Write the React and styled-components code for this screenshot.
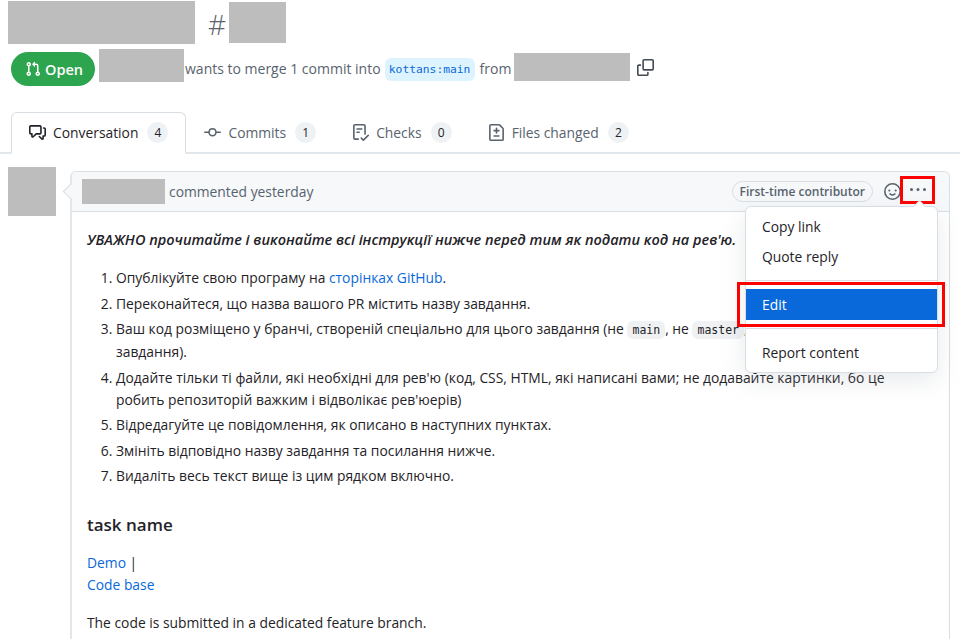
import React from 'react';
import styled, { createGlobalStyle } from 'styled-components';

const GlobalStyle = createGlobalStyle`
  html, body {
    margin: 0;
    padding: 0;
    background: #fff;
    overflow: hidden;
  }
  body {
    font-family: "Open Sans", "Noto Sans", sans-serif;
    color: #1f2328;
  }
  * { box-sizing: border-box; }
`;

const Octicon = ({ d, size = 17, color = 'currentColor' }) => (
  <svg width={size} height={size} viewBox="0 0 16 16" fill={color} aria-hidden="true">
    <path d={d} />
  </svg>
);

const icons = {
  pr: 'M1.5 3.25a2.25 2.25 0 1 1 3 2.122v5.256a2.251 2.251 0 1 1-1.5 0V5.372A2.25 2.25 0 0 1 1.5 3.25Zm5.677-.177L9.573.677A.25.25 0 0 1 10 .854V2.5h1A2.5 2.5 0 0 1 13.5 5v5.628a2.251 2.251 0 1 1-1.5 0V5a1 1 0 0 0-1-1h-1v1.646a.25.25 0 0 1-.427.177L7.177 3.427a.25.25 0 0 1 0-.354ZM3.75 2.5a.75.75 0 1 0 0 1.5.75.75 0 0 0 0-1.5Zm0 9.5a.75.75 0 1 0 0 1.5.75.75 0 0 0 0-1.5Zm8.25.75a.75.75 0 1 0 1.5 0 .75.75 0 0 0-1.5 0Z',
  comment: 'M1.75 1h8.5c.966 0 1.75.784 1.75 1.75v5.5A1.75 1.75 0 0 1 10.25 10H7.061l-2.574 2.573A1.458 1.458 0 0 1 2 11.543V10h-.25A1.75 1.75 0 0 1 0 8.25v-5.5C0 1.784.784 1 1.75 1ZM1.5 2.75v5.5c0 .138.112.25.25.25h1a.75.75 0 0 1 .75.75v2.19l2.72-2.72a.749.749 0 0 1 .53-.22h3.5a.25.25 0 0 0 .25-.25v-5.5a.25.25 0 0 0-.25-.25h-8.5a.25.25 0 0 0-.25.25Zm13 2a.25.25 0 0 0-.25-.25h-.5a.75.75 0 0 1 0-1.5h.5c.966 0 1.75.784 1.75 1.75v5.5A1.75 1.75 0 0 1 14.25 12H14v1.543a1.458 1.458 0 0 1-2.487 1.03L9.22 12.28a.749.749 0 0 1 .326-1.275.749.749 0 0 1 .734.215l2.22 2.22v-2.19a.75.75 0 0 1 .75-.75h1a.25.25 0 0 0 .25-.25Z',
  commit: 'M11.93 8.5a4.002 4.002 0 0 1-7.86 0H.75a.75.75 0 0 1 0-1.5h3.32a4.002 4.002 0 0 1 7.86 0h3.32a.75.75 0 0 1 0 1.5Zm-1.43-.75a2.5 2.5 0 1 0-5 0 2.5 2.5 0 0 0 5 0Z',
  checklist: 'M2.5 1.75v11.5c0 .138.112.25.25.25h3.17a.75.75 0 0 1 0 1.5H2.75A1.75 1.75 0 0 1 1 13.25V1.75C1 .784 1.784 0 2.75 0h8.5C12.216 0 13 .784 13 1.75v7.736a.75.75 0 0 1-1.5 0V1.75a.25.25 0 0 0-.25-.25h-8.5a.25.25 0 0 0-.25.25Zm13.274 9.537v-.001l-4.557 4.45a.75.75 0 0 1-1.055-.008l-1.943-1.95a.75.75 0 0 1 1.062-1.058l1.419 1.425 4.026-3.932a.75.75 0 1 1 1.048 1.074ZM4.75 4h4.5a.75.75 0 0 1 0 1.5h-4.5a.75.75 0 0 1 0-1.5ZM4 7.75A.75.75 0 0 1 4.75 7h2a.75.75 0 0 1 0 1.5h-2A.75.75 0 0 1 4 7.75Z',
  diff: 'M1 1.75C1 .784 1.784 0 2.75 0h7.586c.464 0 .909.184 1.237.513l2.914 2.914c.329.328.513.773.513 1.237v9.586A1.75 1.75 0 0 1 13.25 16H2.75A1.75 1.75 0 0 1 1 14.25Zm1.75-.25a.25.25 0 0 0-.25.25v12.5c0 .138.112.25.25.25h10.5a.25.25 0 0 0 .25-.25V4.664a.25.25 0 0 0-.073-.177l-2.914-2.914a.25.25 0 0 0-.177-.073ZM8 3.25a.75.75 0 0 1 .75.75v1.5h1.5a.75.75 0 0 1 0 1.5h-1.5v1.5a.75.75 0 0 1-1.5 0V7h-1.5a.75.75 0 0 1 0-1.5h1.5V4A.75.75 0 0 1 8 3.25Zm-3 8a.75.75 0 0 1 .75-.75h4.5a.75.75 0 0 1 0 1.5h-4.5a.75.75 0 0 1-.75-.75Z',
  copy: 'M0 6.75C0 5.784.784 5 1.75 5h1.5a.75.75 0 0 1 0 1.5h-1.5a.25.25 0 0 0-.25.25v7.5c0 .138.112.25.25.25h7.5a.25.25 0 0 0 .25-.25v-1.5a.75.75 0 0 1 1.5 0v1.5A1.75 1.75 0 0 1 9.25 16h-7.5A1.75 1.75 0 0 1 0 14.25Z M5 1.75C5 .784 5.784 0 6.75 0h7.5C15.216 0 16 .784 16 1.75v7.5A1.75 1.75 0 0 1 14.25 11h-7.5A1.75 1.75 0 0 1 5 9.25Zm1.75-.25a.25.25 0 0 0-.25.25v7.5c0 .138.112.25.25.25h7.5a.25.25 0 0 0 .25-.25v-7.5a.25.25 0 0 0-.25-.25Z',
  smiley: 'M8 0a8 8 0 1 1 0 16A8 8 0 0 1 8 0ZM1.5 8a6.5 6.5 0 1 0 13 0 6.5 6.5 0 0 0-13 0Zm3.82 1.636a.75.75 0 0 1 1.038.175l.007.009c.103.118.22.222.35.31.264.178.683.37 1.285.37.602 0 1.02-.192 1.285-.371.13-.088.247-.192.35-.31l.007-.008a.75.75 0 0 1 1.222.87l-.022-.015c.02.013.021.015.021.015v.001l-.001.002-.002.003-.005.007-.014.019a2.066 2.066 0 0 1-.184.213c-.16.166-.338.316-.53.445-.63.418-1.37.638-2.127.629-.946 0-1.652-.308-2.126-.63a3.331 3.331 0 0 1-.715-.657l-.014-.02-.005-.006-.002-.003v-.002h-.001l.613-.432-.614.43a.75.75 0 0 1 .183-1.044ZM12 7a1 1 0 1 1-2 0 1 1 0 0 1 2 0ZM5 8a1 1 0 1 1 0-2 1 1 0 0 1 0 2Zm5.25 2.25.592.416a97.71 97.71 0 0 0-.592-.416Z',
  kebab: 'M8 9a1.5 1.5 0 1 0 0-3 1.5 1.5 0 0 0 0 3ZM1.5 9a1.5 1.5 0 1 0 0-3 1.5 1.5 0 0 0 0 3Zm13 0a1.5 1.5 0 1 0 0-3 1.5 1.5 0 0 0 0 3Z',
};

const tabs = [
  { label: 'Conversation', icon: 'comment', count: 4, selected: true },
  { label: 'Commits', icon: 'commit', count: 1 },
  { label: 'Checks', icon: 'checklist', count: 0 },
  { label: 'Files changed', icon: 'diff', count: 2 },
];

const App = () => (
  <Page>
    <GlobalStyle />
    <TitleRow>
      <Redacted $w={187} $h={43} />
      <Hash>#</Hash>
      <Redacted $w={57} $h={41} />
    </TitleRow>

    <MetaRow>
      <StatePill>
        <Octicon d={icons.pr} size={16} />
        Open
      </StatePill>
      <Redacted $w={85} $h={33} $lift={8} />
      <MetaText>wants to merge 1 commit into</MetaText>
      <BranchTag>kottans:main</BranchTag>
      <MetaText>from</MetaText>
      <Redacted $w={116} $h={28} $lift={5} />
      <CopyBtn>
        <Octicon d={icons.copy} />
      </CopyBtn>
    </MetaRow>

    <TabBar>
      {tabs.map((t) => (
        <Tab key={t.label} $selected={t.selected}>
          <TabIcon $selected={t.selected}>
            <Octicon d={icons[t.icon]} />
          </TabIcon>
          {t.label}
          <Counter>{t.count}</Counter>
        </Tab>
      ))}
    </TabBar>

    <Discussion>
      <Redacted $w={48} $h={49} />
      <CommentBox>
        <CommentHeader>
          <Redacted $w={83} $h={25} />
          <HeaderText>commented yesterday</HeaderText>
          <HeaderActions>
            <RoleLabel>First-time contributor</RoleLabel>
            <ReactionBtn>
              <Octicon d={icons.smiley} />
            </ReactionBtn>
            <KebabBtn>
              <Octicon d={icons.kebab} size={16} />
            </KebabBtn>
          </HeaderActions>
          <Menu>
            <MenuItem>Copy link</MenuItem>
            <MenuItem>Quote reply</MenuItem>
            <MenuDivider />
            <MenuItemWrap>
              <MenuItem $active>Edit</MenuItem>
            </MenuItemWrap>
            <MenuDivider />
            <MenuItem>Report content</MenuItem>
          </Menu>
        </CommentHeader>
        <CommentBody>
          <Lead>УВАЖНО прочитайте і виконайте всі інструкції нижче перед тим як подати код на рев'ю.</Lead>
          <Steps>
            <li>Опублікуйте свою програму на <Link>сторінках GitHub</Link>.</li>
            <li>Переконайтеся, що назва вашого PR містить назву завдання.</li>
            <li>
              Ваш код розміщено у бранчі, створеній спеціально для цього завдання (не <Code>main</Code>, не <Code>master</Code>,<br />
              завдання).
            </li>
            <li>
              Додайте тільки ті файли, які необхідні для рев'ю (код, CSS, HTML, які написані вами; не додавайте картинки, бо це<br />
              робить репозиторій важким і відволікає рев'юерів)
            </li>
            <li>Відредагуйте це повідомлення, як описано в наступних пунктах.</li>
            <li>Змініть відповідно назву завдання та посилання нижче.</li>
            <li>Видаліть весь текст вище із цим рядком включно.</li>
          </Steps>
          <TaskName>task name</TaskName>
          <Para>
            <Link>Demo</Link> |<br />
            <Link>Code base</Link>
          </Para>
          <Para>The code is submitted in a dedicated feature branch.</Para>
        </CommentBody>
      </CommentBox>
    </Discussion>
  </Page>
);

const Page = styled.div`
  width: 960px;
  height: 639px;
  overflow: hidden;
  font-size: 13.85px;
`;

const Redacted = styled.div`
  flex: none;
  width: ${(p) => p.$w}px;
  height: ${(p) => p.$h}px;
  margin-bottom: ${(p) => p.$lift || 0}px;
  background: #bdbdbd;
`;

const TitleRow = styled.div`
  display: flex;
  align-items: center;
  height: 44px;
  padding-left: 8px;
`;

const Hash = styled.span`
  margin: 4px 3px 0 13px;
  font-size: 28px;
  font-weight: 300;
  line-height: 36px;
  color: #59636e;
`;

const MetaRow = styled.div`
  display: flex;
  align-items: center;
  height: 40px;
  margin-top: 5px;
  padding-left: 11px;
`;

const StatePill = styled.span`
  display: flex;
  align-items: center;
  gap: 4px;
  width: 84px;
  height: 34px;
  margin-right: 4px;
  padding-left: 14px;
  border-radius: 17px;
  background: #2da44e;
  color: #fff;
  font-size: 14.5px;
  font-weight: 600;
`;

const MetaText = styled.span`
  margin: 0 3px 2px 1px;
  color: #59636e;
  font-size: 14px;
  white-space: nowrap;
`;

const BranchTag = styled.code`
  flex: none;
  width: 90px;
  height: 23px;
  margin: 0 4px 0 1px;
  line-height: 23px;
  border-radius: 6px;
  background: #ddf4ff;
  color: #0969da;
  font-family: "DejaVu Sans Mono", "Liberation Mono", monospace;
  font-size: 11.3px;
  text-align: center;
`;

const CopyBtn = styled.span`
  display: flex;
  margin-left: 7px;
  margin-bottom: 3px;
  color: #424a53;
`;

const TabBar = styled.div`
  display: flex;
  align-items: flex-end;
  height: 42px;
  margin-top: 23px;
  padding-left: 11px;
  border-bottom: 2px solid #e1e6eb;
`;

const Tab = styled.div`
  display: flex;
  align-items: center;
  height: 42px;
  margin-bottom: -2px;
  padding: 0 17px;
  border: 1px solid ${(p) => (p.$selected ? '#d8dee4' : 'transparent')};
  border-bottom: 2px solid ${(p) => (p.$selected ? '#fff' : 'transparent')};
  border-radius: 6px 6px 0 0;
  color: ${(p) => (p.$selected ? '#1f2328' : '#59636e')};
`;

const TabIcon = styled.span`
  display: flex;
  margin-right: 7px;
  color: ${(p) => (p.$selected ? '#1f2328' : '#59636e')};
`;

const Counter = styled.span`
  display: flex;
  align-items: center;
  justify-content: center;
  width: 21px;
  height: 21px;
  margin-left: 9px;
  border-radius: 50%;
  background: #eff2f5;
  color: #1f2328;
  font-size: 12px;
`;

const Discussion = styled.div`
  display: flex;
  align-items: flex-start;
  gap: 14px;
  margin-top: 13px;
  padding-left: 8px;
`;

const CommentBox = styled.div`
  position: relative;
  width: 880px;
  height: 600px;
  margin-top: 4px;
  border: 1px solid #d8dee4;
  border-left: 2px solid #e1e6eb;
  border-radius: 6px;
  &::before {
    content: '';
    position: absolute;
    top: 14px;
    left: -7px;
    width: 10px;
    height: 10px;
    transform: rotate(45deg);
    background: #f6f8fa;
    border-left: 1px solid #d8dee4;
    border-bottom: 1px solid #d8dee4;
  }
`;

const CommentHeader = styled.div`
  position: relative;
  display: flex;
  align-items: center;
  height: 40px;
  padding-left: 10px;
  border-bottom: 1px solid #d8dee4;
  border-radius: 6px 6px 0 0;
  background: #f6f8fa;
`;

const HeaderText = styled.span`
  margin-left: 4px;
  color: #59636e;
`;

const HeaderActions = styled.div`
  display: flex;
  align-items: center;
  margin-left: auto;
  margin-right: 14px;
`;

const RoleLabel = styled.span`
  height: 21px;
  padding: 0 7px;
  line-height: 19px;
  border: 1px solid #d8dee4;
  border-radius: 11px;
  color: #59636e;
  font-size: 12px;
  font-weight: 600;
  white-space: nowrap;
`;

const ReactionBtn = styled.span`
  display: flex;
  margin-left: 11px;
  color: #59636e;
`;

const KebabBtn = styled.span`
  display: flex;
  align-items: center;
  justify-content: center;
  width: 35px;
  height: 28px;
  margin-left: -1px;
  margin-bottom: 3px;
  border: 3px solid #f00;
  color: #59636e;
`;

const Menu = styled.div`
  position: absolute;
  z-index: 2;
  top: 34px;
  right: 11px;
  width: 193px;
  padding: 5px 0 4px;
  border: 1px solid #d8dee4;
  border-radius: 6px;
  background: #fff;
  box-shadow: 0 8px 24px rgba(140, 149, 159, 0.2);
  &::before {
    content: '';
    position: absolute;
    top: -5px;
    right: 13px;
    width: 8px;
    height: 8px;
    transform: rotate(45deg);
    background: #fff;
    border-left: 1px solid #d8dee4;
    border-top: 1px solid #d8dee4;
  }
`;

const MenuItemWrap = styled.div`
  position: relative;
  &::after {
    content: '';
    position: absolute;
    inset: -7px -8px -7px -9px;
    border: 3px solid #f00;
  }
`;

const MenuItem = styled.div`
  height: ${(p) => (p.$active ? 31 : 30)}px;
  padding-left: 16px;
  line-height: ${(p) => (p.$active ? 31 : 30)}px;
  background: ${(p) => (p.$active ? '#0969da' : 'transparent')};
  color: ${(p) => (p.$active ? '#fff' : '#1f2328')};
`;

const MenuDivider = styled.div`
  height: 1px;
  margin: 8px 0;
  background: #d8dee4;
  & + div + & { margin-bottom: 9px; }
`;

const CommentBody = styled.div`
  padding: 17px 15px;
  line-height: 22px;
`;

const Lead = styled.p`
  margin: 0 0 16px;
  font-size: 14.5px;
  font-weight: 600;
  font-style: italic;
`;

const Steps = styled.ol`
  margin: 0 0 27px;
  padding-left: 29px;
  li { margin-top: 3.5px; }
`;

const Link = styled.a`
  color: #0969da;
`;

const Code = styled.code`
  padding: 2px 5px;
  border-radius: 6px;
  background: #eff1f3;
  font-family: "DejaVu Sans Mono", "Liberation Mono", monospace;
  font-size: 11.5px;
`;

const TaskName = styled.h3`
  margin: 0 0 16px;
  font-size: 17px;
  font-weight: 600;
`;

const Para = styled.p`
  margin: 0 0 16px;
`;

export default App;
